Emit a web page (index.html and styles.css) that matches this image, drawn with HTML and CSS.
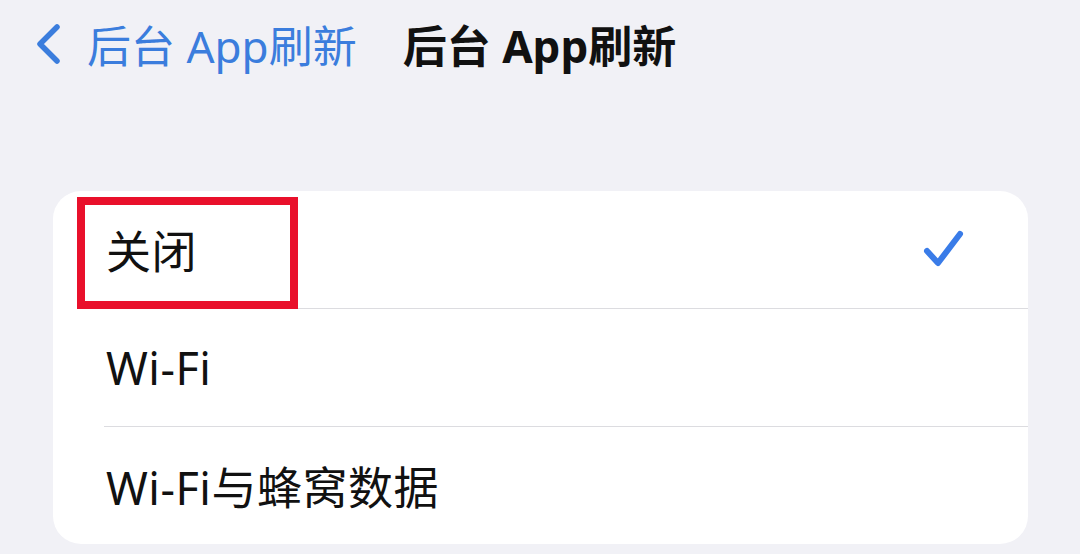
FILE: index.html
```html
<!DOCTYPE html>
<html lang="zh-CN">
<head>
    <meta charset="UTF-8">
    <meta name="viewport" content="width=device-width, initial-scale=1.0">
    <title>后台 App刷新</title>
    <link rel="stylesheet" href="styles.css">
</head>
<body>

    <div class="nav-bar">
        <div class="back-link">
            <svg class="chevron" width="30" height="42" viewBox="0 0 30 42">
                <path d="M24 4 L7 21 L24 38" fill="none" stroke="currentColor" stroke-width="5.5" stroke-linecap="round" stroke-linejoin="round"/>
            </svg>
            <span>后台 App刷新</span>
        </div>
        <h1 class="nav-title">后台 App刷新</h1>
    </div>

    <div class="options-card">
        <div class="highlight-box"></div>

        <div class="option-row">
            <span class="option-label">关闭</span>
            <svg class="checkmark" width="42" height="42" viewBox="0 0 42 42">
                <path d="M5 22 L16 34 L38 5" fill="none" stroke="currentColor" stroke-width="6" stroke-linecap="round" stroke-linejoin="round"/>
            </svg>
        </div>
        <div class="option-row">
            <span class="option-label">Wi-Fi</span>
        </div>
        <div class="option-row">
            <span class="option-label">Wi-Fi与蜂窝数据</span>
        </div>
    </div>

</body>
</html>
```

FILE: styles.css
```css
body {
    font-family: "Noto Sans", "Noto Sans CJK SC", sans-serif;
    margin: 0;
    padding: 0;
    background-color: #f1f1f6;
    color: #111;
}

.nav-bar {
    display: flex;
    align-items: center;
    height: 88px;
    padding-left: 33px;
}

.back-link {
    display: flex;
    align-items: center;
    gap: 24px;
    color: #3b7ddd;
    font-size: 44px;
}

.nav-title {
    margin: 0 0 0 46px;
    font-size: 44px;
    font-weight: bold;
}

.options-card {
    position: relative;
    margin: 103px 52px 0 53px;
    background-color: #fff;
    border-radius: 28px;
}

.option-row {
    display: flex;
    justify-content: space-between;
    align-items: center;
    height: 117px;
    margin-left: 51px;
    padding: 0 64px 0 2px;
    border-bottom: 1px solid #dcdce0;
    font-size: 45px;
    letter-spacing: 0.5px;
}

.option-row:last-child {
    border-bottom: none;
}

.checkmark {
    color: #3a7ce8;
}

/* annotation drawn over the first row */
.highlight-box {
    position: absolute;
    left: 24px;
    top: 6px;
    width: 205px;
    height: 96px;
    border: 8px solid #e9102b;
}
```
